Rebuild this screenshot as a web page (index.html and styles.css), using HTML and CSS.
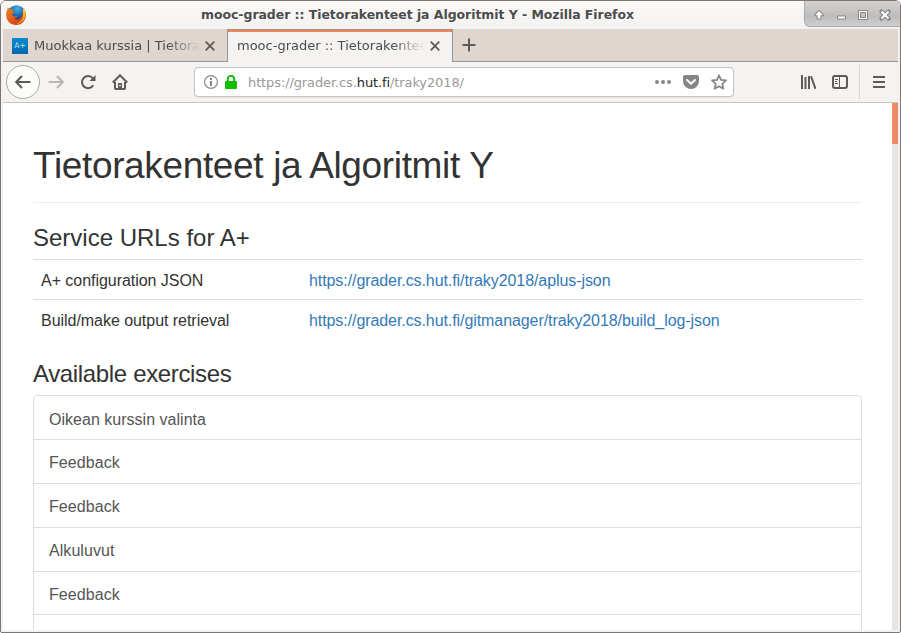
FILE: index.html
```
<!DOCTYPE html>
<html lang="fi">
<head>
<meta charset="utf-8">
<title>mooc-grader :: Tietorakenteet ja Algoritmit Y</title>
<link rel="stylesheet" href="styles.css">
</head>
<body>
<div class="window">
  <header class="titlebar">
    <svg class="fox" width="20" height="20" viewBox="0 0 20 20">
      <defs>
        <radialGradient id="globe" cx=".55" cy=".2" r=".8"><stop offset="0" stop-color="#45b5e8"/><stop offset=".5" stop-color="#1768b0"/><stop offset="1" stop-color="#102a60"/></radialGradient>
        <linearGradient id="fur" x1="0" y1="0" x2="1" y2="1"><stop offset="0" stop-color="#e58a20"/><stop offset=".5" stop-color="#e2571b"/><stop offset="1" stop-color="#b92a16"/></linearGradient>
        <linearGradient id="tail" x1="0" y1="0" x2="0" y2="1"><stop offset="0" stop-color="#ffe84d"/><stop offset="1" stop-color="#f07a15"/></linearGradient>
      </defs>
      <circle cx="10.5" cy="9" r="8.8" fill="url(#globe)"/>
      <path d="M2 2.5 4.3 4.1 7 3.8 6.4 6 9 7 6.8 8.7 6.3 10.6 8.8 11.5 11.2 10.7C11 13 9 13.6 7.7 13.5 11 16 15.5 13.5 16 9.5L17 6 17 3C19.5 5 20.4 8.2 19.8 11.5 19 16.8 14.8 20 10 20 4.5 20 .2 15.7.2 10.2.2 7 1 4.8 2 2.5Z" fill="url(#fur)"/>
      <path d="M17 3C20.8 6.8 20.4 13 16.8 16.4 14.7 18.4 12 19 9.5 18.5 14 17.6 17 14 17.2 9.8Z" fill="url(#tail)"/>
    </svg>
    <h1 class="caption">mooc-grader :: Tietorakenteet ja Algoritmit Y - Mozilla Firefox</h1>
    <div class="controls">
      <svg width="97" height="26" viewBox="0 0 97 26">
        <g fill="none" stroke="#858585" stroke-linejoin="round"><path d="M15 11 11 15.300H13.500V18.500H16.500V15.300H19Z" stroke-width="2"/><path d="M34 16.500H41V18.500H34Z" stroke-width="2"/></g>
        <path d="M15 11 11 15.300H13.500V18.500H16.500V15.300H19Z" fill="#fff"/>
        <path d="M34 16.500H41V18.500H34Z" fill="#fff"/>
        <path d="M54.500 10.500H63.500V19.500H54.500Z" fill="#fff" stroke="#858585"/>
        <path d="M56.500 12.500H61.500V17.500H56.500Z" fill="#c5c5c5" stroke="#858585"/>
        <path d="M77.500 11.500 84.500 18.500M84.500 11.500 77.500 18.500" stroke="#858585" stroke-width="4.400" stroke-linecap="round"/>
        <path d="M77.500 11.500 84.500 18.500M84.500 11.500 77.500 18.500" stroke="#fff" stroke-width="2.200"/>
      </svg>
    </div>
  </header>
  <nav class="tabs">
    <div class="tab">
      <span class="favicon">A+</span>
      <span class="label">Muokkaa kurssia | Tietora</span>
      <svg class="close" width="10" height="10" viewBox="0 0 10 10"><path d="M.7.7 9.300 9.300M9.300.7.7 9.300"/></svg>
    </div>
    <div class="tab active">
      <span class="label">mooc-grader :: Tietorakentee</span>
      <svg class="close" width="10" height="10" viewBox="0 0 10 10"><path d="M.7.7 9.300 9.300M9.300.7.7 9.300"/></svg>
    </div>
    <div class="newtab"><svg width="14" height="14" viewBox="0 0 14 14"><path d="M7 .5V13.500M.5 7H13.500"/></svg></div>
  </nav>
  <div class="toolbar">
    <div class="back"><svg width="16" height="16" viewBox="0 0 16 16"><path d="M15.500 8H1.500M7 2 1.200 8 7 14"/></svg></div>
    <svg class="icon forward" width="16" height="16" viewBox="0 0 16 16"><path d="M.5 8H14.500M9 2 14.800 8 9 14"/></svg>
    <svg class="icon" width="16" height="16" viewBox="0 0 16 16"><path d="M13.200 11.200A6 6 0 1 1 12.600 4.200"/><path class="solid" d="M15.500 1V7H9.500Z"/></svg>
    <svg class="icon" width="16" height="16" viewBox="0 0 16 16"><path d="M.8 8.500 8 1.300 15.200 8.500"/><path d="M3 8V14.300Q3 15 4 15H12Q13 15 13 14.300V8"/><path class="solid" d="M6 9H10V15H6Z"/><path class="hole" d="M8 10.500V12.500"/></svg>
    <div class="urlbar">
      <svg width="14" height="14" viewBox="0 0 14 14"><circle cx="7" cy="7" r="6.400" fill="none" stroke="#8a8a8a" stroke-width="1.200"/><path d="M7 3V5M7 6V11" stroke="#777" stroke-width="1.800"/></svg>
      <svg class="lock" width="12" height="14" viewBox="0 0 12 14"><path d="M2.800 7V4A3.200 3.200 0 0 1 9.200 4V7" fill="none" stroke="#12bc00" stroke-width="2"/><rect y="6" width="12" height="8" rx="1" fill="#12bc00"/></svg>
      <span class="url">https://grader.cs.<b>hut.fi</b>/traky2018/</span>
      <svg class="dots" width="16" height="16" viewBox="0 0 16 16" fill="#868685"><circle cx="2" cy="8" r="2"/><circle cx="8" cy="8" r="2"/><circle cx="14" cy="8" r="2"/></svg>
      <svg width="16" height="16" viewBox="0 0 16 16"><path d="M2 1H14Q16 1 16 3V7A8 8 0 0 1 0 7V3Q0 1 2 1Z" fill="#868685"/><path d="M4 6 8 9.800 12 6" fill="none" stroke="#fff" stroke-width="2" stroke-linecap="round" stroke-linejoin="round"/></svg>
      <svg width="16" height="16" viewBox="0 0 16 16"><path d="M8 1.300 10 5.900 15 6.400 11.300 9.800 12.300 14.700 8 12.300 3.700 14.700 4.700 9.800 1 6.400 6 5.900Z" fill="none" stroke="#868685" stroke-width="1.800" stroke-linejoin="round"/></svg>
    </div>
    <svg class="icon library" width="16" height="16" viewBox="0 0 16 16"><path d="M2 1V15M5.500 3V15M9 2V15M11 2.300 15.500 14.800"/></svg>
    <svg class="icon" width="16" height="16" viewBox="0 0 16 16"><rect x="1" y="2" width="14" height="12" rx="2"/><path class="thin" d="M7.500 2V14M3 5.500H6M3 7.500H5M3 9.500H6"/></svg>
    <div class="menu"><svg width="12" height="12" viewBox="0 0 12 12"><path d="M0 1H12M0 6H12M0 11H12"/></svg></div>
  </div>
  <div class="viewport">
    <main class="page">
      <h1>Tietorakenteet ja Algoritmit Y</h1>
      <h2>Service URLs for A+</h2>
      <div class="table">
        <div class="row"><span>A+ configuration JSON</span><a>https://grader.cs.hut.fi/traky2018/aplus-json</a></div>
        <div class="row"><span>Build/make output retrieval</span><a>https://grader.cs.hut.fi/gitmanager/traky2018/build_log-json</a></div>
      </div>
      <h2 class="available">Available exercises</h2>
      <div class="list">
        <a>Oikean kurssin valinta</a>
        <a>Feedback</a>
        <a>Feedback</a>
        <a>Alkuluvut</a>
        <a>Feedback</a>
        <a></a>
      </div>
    </main>
    <div class="scrollbar"><div class="thumb"></div></div>
  </div>
</div>
</body>
</html>
```
FILE: styles.css
```
* { box-sizing: border-box; }
body { margin: 0; background: #fff; overflow: hidden; }
svg { display: block; flex: none; }
.window {
  width: 901px; height: 633px; overflow: hidden;
  display: flex; flex-direction: column;
  border: 1px solid #7a7775; border-radius: 6px 6px 2px 2px;
  background: #f2f1f0; padding: 0 2px 2px;
  font-family: "DejaVu Sans", sans-serif; font-size: 13px; color: #4c4c4c;
}
.titlebar {
  height: 28px; flex: none; margin: 0 -2px; display: flex;
  background: linear-gradient(#faf9f8, #f3f2f0);
}
.fox { margin: 4px 0 0 5px; }
.caption {
  margin: 0 0 0 175px; width: 603px; font-size: 12.5px; line-height: 27px; letter-spacing: -0.06px;
  font-weight: bold; white-space: nowrap; text-shadow: 1px 1px #fff;
}
.controls {
  width: 97px; height: 26px; margin-left: auto; margin-right: -1px;
  background: linear-gradient(#d2d1d0, #c5c4c3 45%, #bdbcbb 60%, #d0cfce);
  border-left: 1px solid #aaa; border-bottom: 1px solid #aaa; border-bottom-left-radius: 6px;
}
.controls svg { margin: -1px 0 0 -1px; }
.tabs { height: 33px; flex: none; display: flex; background: #dfd6d0; border-bottom: 1px solid #999491; }
.tab { display: flex; align-items: center; width: 224px; padding: 1px 12px 0 9px; }
.tab.active {
  width: 226px; height: 33px; padding: 0 12px 0 9px; background: #f4f3f1;
  border: 1px solid #999491; border-bottom: 0; box-shadow: inset 0 2px #ee8757;
}
.favicon {
  width: 16px; height: 16px; flex: none; margin-right: 6px; background: linear-gradient(#078bd0, #0667ad);
  color: #c8e8f8; font-size: 7.5px; line-height: 16px; text-align: center;
}
.label {
  flex: 1; overflow: hidden; white-space: nowrap; margin-right: 5px; line-height: 32px;
  -webkit-mask-image: linear-gradient(90deg, #000 calc(100% - 32px), transparent);
  mask-image: linear-gradient(90deg, #000 calc(100% - 32px), transparent);
}
.close { fill: none; stroke: #5c5b59; stroke-width: 1.8; }
.newtab { display: flex; align-items: center; padding-left: 9px; }
.newtab svg { fill: none; stroke: #5c5b59; stroke-width: 2; }
.toolbar {
  height: 41px; flex: none; display: flex; align-items: center; padding-left: 3px;
  background: #f4f3f1; border-bottom: 1px solid #c8c4c1;
}
.back {
  width: 34px; height: 34px; border: 1px solid #aaa9a7; border-radius: 50%; background: #fcfcfb;
  display: flex; align-items: center; justify-content: center; margin-right: 8px;
}
.back svg, .icon, .menu svg { fill: none; stroke: #5c5b59; stroke-width: 2; }
.icon { margin-right: 16px; }
.icon.forward { stroke: #b7b6b4; }
.icon .solid { fill: #5c5b59; stroke: none; }
.icon .hole { stroke: #eee; stroke-width: 1.3; }
.icon .thin { stroke-width: 1; }
.urlbar {
  width: 540px; height: 30px; margin-left: 50px; padding: 0 6px 0 9px; display: flex; align-items: center;
  background: #fff; border: 1px solid #c8c4c1; border-radius: 4px; box-shadow: 0 1px 2px #0001;
}
.lock { margin: 0 11px 0 7px; }
.url { flex: 1; color: #999; white-space: nowrap; letter-spacing: -0.11px; }
.url b { font-weight: normal; color: #222; }
.urlbar .dots ~ svg { margin-left: 12px; }
.library { margin-left: 66px; }
.menu { width: 39px; height: 34px; margin-left: -5px; border-left: 1px solid #d8d7d5; padding: 11px 0 0 13px; }
.viewport { height: 527px; flex: none; display: flex; background: #fff; overflow: hidden; }
.page { flex: 1; padding: 0 30px; color: #333; font: 16px/24px "Liberation Sans", sans-serif; }
.page h1 {
  height: 100px; margin: 0; padding-top: 42px; border-bottom: 1px solid #eee;
  font-size: 37px; line-height: 42px; font-weight: normal; letter-spacing: -0.35px;
}
.page h2 { margin: 22px 0 8px; height: 26px; font-size: 24px; line-height: 26px; font-weight: normal; }
.row { display: grid; grid-template-columns: 268px 1fr; height: 40px; border-top: 1px solid #ddd; padding: 9px 8px; }
.row span { letter-spacing: -0.04px; }
.row a { color: #337ab7; letter-spacing: -0.08px; }
.page .available { margin: 22px 0 8px; letter-spacing: -0.35px; }
.list { border: 1px solid #ddd; border-radius: 4px 4px 0 0; }
.list a { display: block; height: 44px; padding: 11px 15px; border-bottom: 1px solid #ddd; color: #555; letter-spacing: 0.06px; }
.list a:first-child { padding-top: 12px; letter-spacing: 0.02px; }
.list a:nth-child(5) { height: 43px; }
.scrollbar { width: 6px; background: #e5e5e5; }
.thumb { height: 41px; background: #f08b66; }
```
